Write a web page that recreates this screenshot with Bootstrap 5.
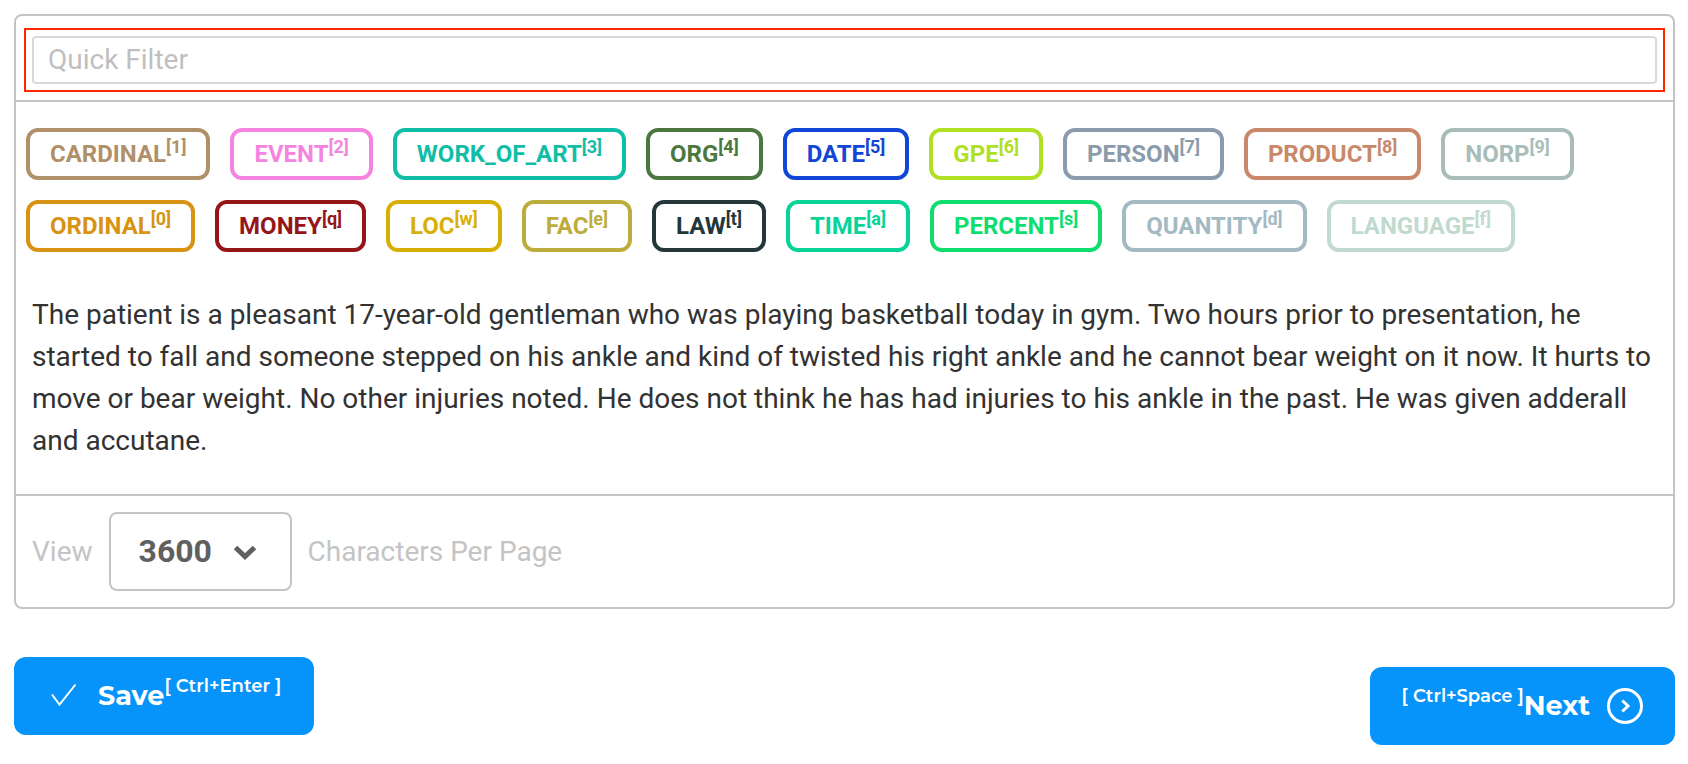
<!DOCTYPE html>
<html lang="en">
<head>
<meta charset="utf-8">
<meta name="viewport" content="width=device-width, initial-scale=1">
<title>Entity labeling</title>
<link href="https://cdn.jsdelivr.net/npm/bootstrap@5.3.0/dist/css/bootstrap.min.css" rel="stylesheet">
<style>
  body { font-family: Roboto, sans-serif; font-size: 28px; line-height: 42px; color: #323232; background: #fff; }
  .page { padding: 14px 13px 0 14px; }
  .panel { border: 2px solid #c4c4c4; border-radius: 8px; }
  .filter-row { padding: 12px 8px 8px; border-bottom: 2px solid #c4c4c4; }
  .filter-frame { border: 2px solid #ff2600; padding: 6px; }
  .filter-input { height: 48px; border: 2px solid #d9d9d9; border-radius: 4px; padding: 0 14px 2px; font-size: 28px; line-height: 42px; }
  .filter-input::placeholder { color: #bfbfbf; opacity: 1; }
  .tags { gap: 20px; padding: 26px 10px 42px; }
  .tag { height: 52px; border: 4px solid currentColor; border-radius: 12px; background: #fff; padding: 0 20px; font-size: 24px; font-weight: 700; line-height: 42px; white-space: nowrap; }
  .tag sup { font-size: 18px; top: -9px; line-height: 0; vertical-align: baseline; }
  .doc-text { padding: 0 16px 32px; margin: 0; }
  .pager { gap: 16px; padding: 16px; border-top: 2px solid #c4c4c4; color: #c4c4c4; }
  .size-select { width: 183px; height: 79px; border: 2px solid #c4c4c4; border-radius: 8px; padding: 0 0 2px 28px; font-size: 32px; font-weight: 700; color: #606060;
    background-image: url("data:image/svg+xml,%3csvg xmlns='http://www.w3.org/2000/svg' viewBox='0 0 26 18'%3e%3cpath d='M3.500 4.500 13 13.500 22.500 4.500' fill='none' stroke='%23606060' stroke-width='5'/%3e%3c/svg%3e");
    background-size: 26px 18px; background-position: right 32px center; }
  .actions { padding-top: 48px; }
  .action { height: 78px; border: 0; border-radius: 12px; background: #0693fa; color: #fff; font-family: Montserrat, Inter, sans-serif; font-size: 27px; font-weight: 700; }
  .action:hover { background: #0584e2; color: #fff; }
  .action sup { font-size: 18px; font-weight: 600; top: -13px; line-height: 0; vertical-align: baseline; }
  .save { padding: 0 33px 0 36px; gap: 20px; }
  .next { padding: 0 32px; gap: 17px; margin-top: 10px; }
</style>
</head>
<body>
<main class="page">
  <section class="panel">
    <div class="filter-row">
      <div class="filter-frame">
        <input type="text" class="form-control filter-input" placeholder="Quick Filter" aria-label="Quick Filter">
      </div>
    </div>
    <div class="tags d-flex flex-wrap">
      <button type="button" class="tag" style="color:#b09069">CARDINAL<sup>[1]</sup></button>
      <button type="button" class="tag" style="color:#f584e0">EVENT<sup>[2]</sup></button>
      <button type="button" class="tag" style="color:#10bea7">WORK_OF_ART<sup>[3]</sup></button>
      <button type="button" class="tag" style="color:#4b7740">ORG<sup>[4]</sup></button>
      <button type="button" class="tag" style="color:#1246d6">DATE<sup>[5]</sup></button>
      <button type="button" class="tag" style="color:#b0e024">GPE<sup>[6]</sup></button>
      <button type="button" class="tag" style="color:#8a9cab">PERSON<sup>[7]</sup></button>
      <button type="button" class="tag" style="color:#c88869">PRODUCT<sup>[8]</sup></button>
      <button type="button" class="tag" style="color:#a8bdb9">NORP<sup>[9]</sup></button>
      <button type="button" class="tag" style="color:#d89312">ORDINAL<sup>[0]</sup></button>
      <button type="button" class="tag" style="color:#961518">MONEY<sup>[q]</sup></button>
      <button type="button" class="tag" style="color:#d8b005">LOC<sup>[w]</sup></button>
      <button type="button" class="tag" style="color:#bdad3c">FAC<sup>[e]</sup></button>
      <button type="button" class="tag" style="color:#24383c">LAW<sup>[t]</sup></button>
      <button type="button" class="tag" style="color:#08d497">TIME<sup>[a]</sup></button>
      <button type="button" class="tag" style="color:#0fde6e">PERCENT<sup>[s]</sup></button>
      <button type="button" class="tag" style="color:#a3bac2">QUANTITY<sup>[d]</sup></button>
      <button type="button" class="tag" style="color:#c0dad0">LANGUAGE<sup>[f]</sup></button>
    </div>
    <p class="doc-text">The patient is a pleasant 17-year-old gentleman who was playing basketball today in gym. Two hours prior to presentation, he started to fall and someone stepped on his ankle and kind of twisted his right ankle and he cannot bear weight on it now. It hurts to move or bear weight. No other injuries noted. He does not think he has had injuries to his ankle in the past. He was given adderall and accutane.</p>
    <div class="pager d-flex align-items-center">
      <label for="page-size">View</label>
      <select id="page-size" class="form-select size-select">
        <option selected>3600</option>
      </select>
      <span>Characters Per Page</span>
    </div>
  </section>
  <div class="actions d-flex justify-content-between align-items-start">
    <button type="button" class="btn action save d-flex align-items-center">
      <svg width="28" height="26" viewBox="0 0 28 26" fill="none" stroke="#fff" stroke-width="2" aria-hidden="true"><path d="M2 11.500 9.500 21.500 25.500 1.500"/></svg>
      <span>Save<sup>[ Ctrl+Enter ]</sup></span>
    </button>
    <button type="button" class="btn action next d-flex align-items-center">
      <span><sup>[ Ctrl+Space ]</sup>Next</span>
      <svg width="36" height="36" viewBox="0 0 36 36" fill="none" stroke="#fff" stroke-width="3" aria-hidden="true"><circle cx="18" cy="18" r="16.500"/><path d="M15.300 12.500 21 18 15.300 23.500"/></svg>
    </button>
  </div>
</main>
<script src="https://cdn.jsdelivr.net/npm/bootstrap@5.3.0/dist/js/bootstrap.bundle.min.js"></script>
</body>
</html>
